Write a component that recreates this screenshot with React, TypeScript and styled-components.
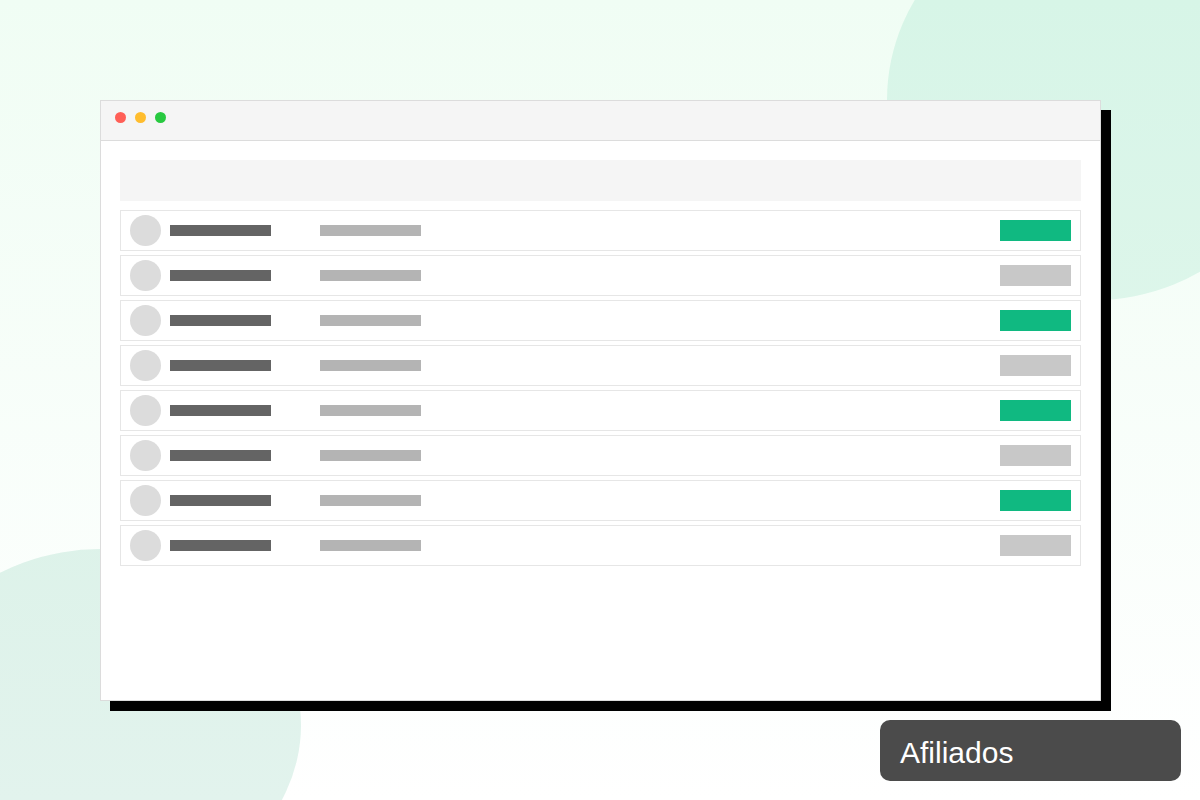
import React from "react";
import styled, { createGlobalStyle } from "styled-components";

const GlobalStyle = createGlobalStyle`
  *, *::before, *::after { box-sizing: border-box; }
  body { margin: 0; }
`;

const Page = styled.main`
  position: relative;
  display: flex;
  flex-direction: column;
  min-height: 100vh;
  padding: 100px 0 19px;
  overflow: hidden;
  background: linear-gradient(180deg, #f0fdf4 0%, #ffffff 100%);
  font-family: "Liberation Sans", Arial, sans-serif;
`;

const MintBlob = styled.div`
  position: absolute;
  top: -100px;
  right: -101px;
  width: 414px;
  height: 400px;
  border-radius: 50%;
  background: rgba(16, 185, 129, 0.11);
`;

const TealBlob = styled.div`
  position: absolute;
  bottom: -101px;
  left: -100px;
  width: 401px;
  height: 352px;
  border-radius: 50%;
  background: rgba(5, 150, 105, 0.118);
`;

const Window = styled.section`
  position: relative;
  flex: 1;
  margin: 0 99px 0 100px;
  border: 1px solid #dcdcdc;
  background: #ffffff;
  box-shadow: 10px 10px 0 #000000;
`;

const TitleBar = styled.header`
  display: flex;
  gap: 9px;
  padding: 11px 14px 17px;
  border-bottom: 1px solid #dcdcdc;
  background: #f5f5f5;
`;

const Dot = styled.span<{ $color: string }>`
  width: 11px;
  height: 11px;
  border-radius: 50%;
  background: ${({ $color }) => $color};
`;

const Content = styled.div`
  display: flex;
  flex-direction: column;
  gap: 9px;
  padding: 19px;
`;

const Toolbar = styled.div`
  height: 41px;
  background: #f5f5f5;
`;

const List = styled.ul`
  display: flex;
  flex-direction: column;
  gap: 4px;
  margin: 0;
  padding: 0;
  list-style: none;
`;

const Row = styled.li`
  display: flex;
  align-items: center;
  height: 41px;
  padding: 0 9px;
  border: 1px solid #e6e6e6;
  background: #ffffff;
`;

const Avatar = styled.span`
  width: 31px;
  height: 31px;
  margin-right: 9px;
  border-radius: 50%;
  background: #dcdcdc;
`;

const NameBar = styled.span`
  width: 101px;
  height: 11px;
  margin-right: 49px;
  background: #646464;
`;

const DetailBar = styled.span`
  width: 101px;
  height: 11px;
  background: #b4b4b4;
`;

const Status = styled.span<{ $active: boolean }>`
  width: 71px;
  height: 21px;
  margin-left: auto;
  background: ${({ $active }) => ($active ? "#10b981" : "#c8c8c8")};
`;

const Caption = styled.h1`
  position: relative;
  align-self: flex-end;
  width: 301px;
  margin: 19px 19px 0 0;
  padding: 15px 20px 10px;
  border-radius: 10px;
  background: #4b4b4b;
  color: #ffffff;
  font-size: 30px;
  font-weight: 400;
  line-height: 36px;
`;

const dots = ["#ff5f57", "#ffbd2e", "#28c940"];
const affiliates = [true, false, true, false, true, false, true, false];

export default function App() {
  return (
    <>
      <GlobalStyle />
      <Page>
        <MintBlob />
        <TealBlob />
        <Window>
          <TitleBar>
            {dots.map((color) => (
              <Dot key={color} $color={color} />
            ))}
          </TitleBar>
          <Content>
            <Toolbar />
            <List>
              {affiliates.map((active, index) => (
                <Row key={index}>
                  <Avatar />
                  <NameBar />
                  <DetailBar />
                  <Status $active={active} />
                </Row>
              ))}
            </List>
          </Content>
        </Window>
        <Caption>Afiliados</Caption>
      </Page>
    </>
  );
}
